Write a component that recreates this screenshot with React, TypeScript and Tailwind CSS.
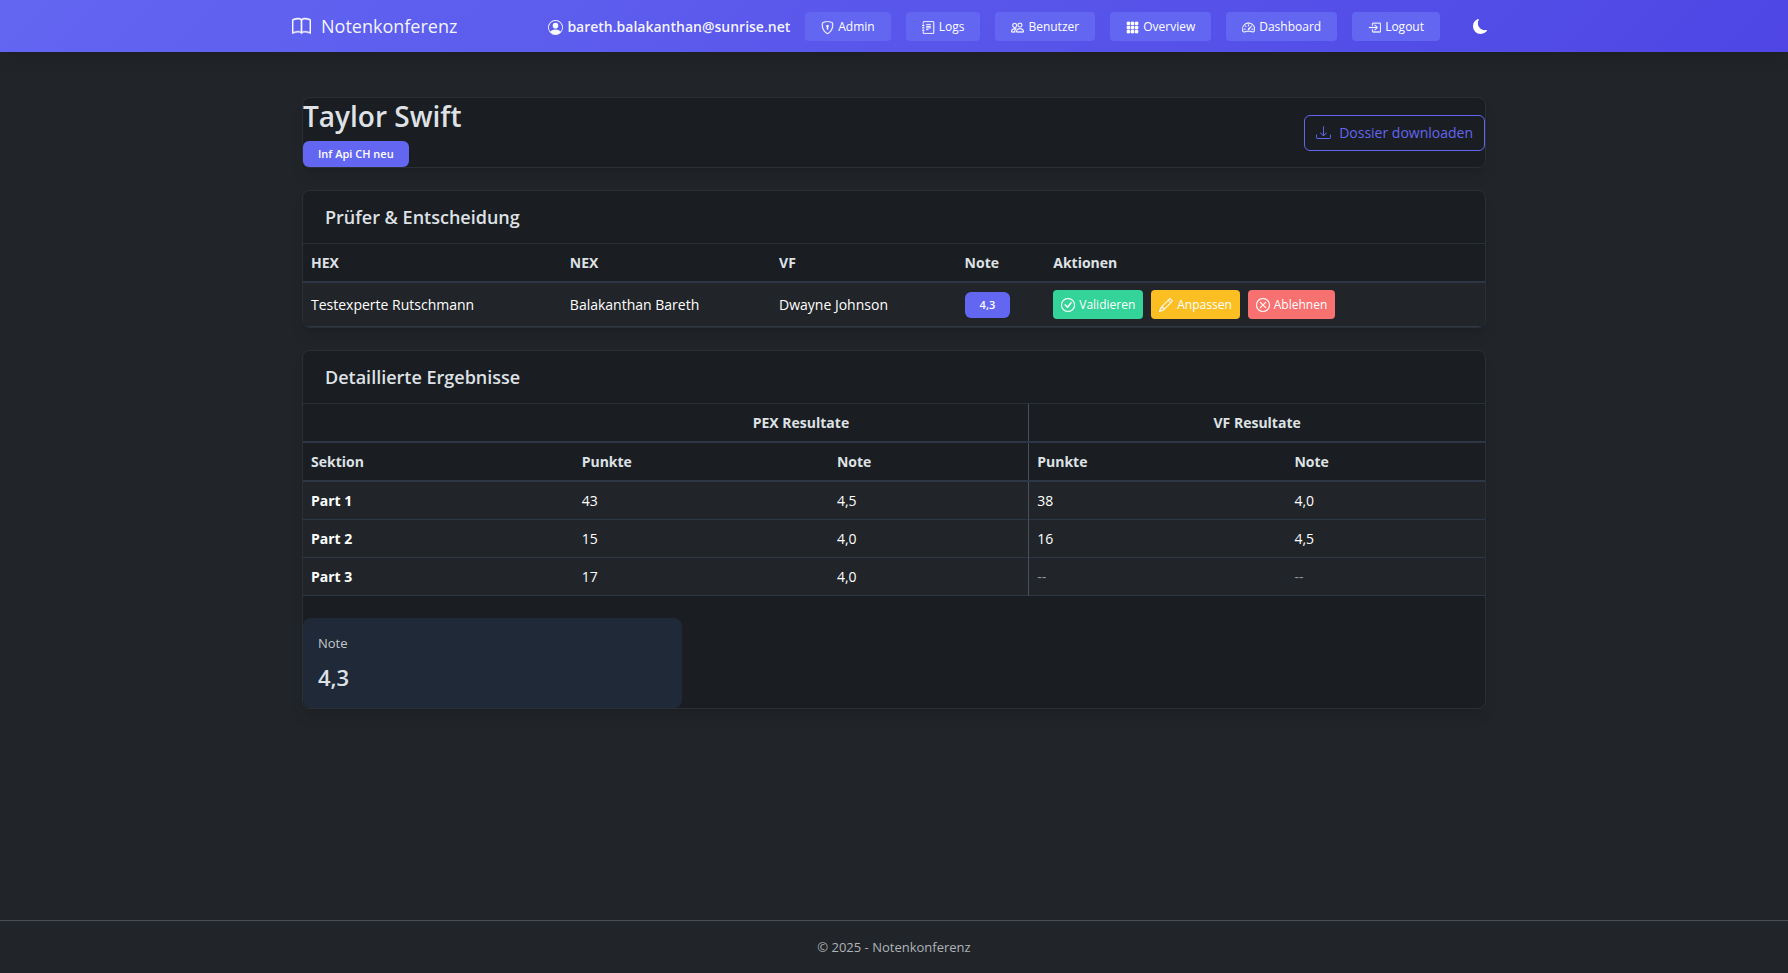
import React, { useState } from 'react';
import type { IconType } from 'react-icons';
import {
  BsBook,
  BsBoxArrowInRight,
  BsCheckCircle,
  BsDownload,
  BsGrid3X3GapFill,
  BsJournalText,
  BsMoonFill,
  BsPencil,
  BsPeople,
  BsPersonCircle,
  BsShieldLock,
  BsSpeedometer2,
  BsXCircle,
} from 'react-icons/bs';

interface NavItem {
  label: string;
  icon: IconType;
}

interface SectionResult {
  name: string;
  pexPoints: string;
  pexGrade: string;
  vfPoints: string | null;
  vfGrade: string | null;
}

const navItems: NavItem[] = [
  { label: 'Admin', icon: BsShieldLock },
  { label: 'Logs', icon: BsJournalText },
  { label: 'Benutzer', icon: BsPeople },
  { label: 'Overview', icon: BsGrid3X3GapFill },
  { label: 'Dashboard', icon: BsSpeedometer2 },
  { label: 'Logout', icon: BsBoxArrowInRight },
];

const results: SectionResult[] = [
  { name: 'Part 1', pexPoints: '43', pexGrade: '4,5', vfPoints: '38', vfGrade: '4,0' },
  { name: 'Part 2', pexPoints: '15', pexGrade: '4,0', vfPoints: '16', vfGrade: '4,5' },
  { name: 'Part 3', pexPoints: '17', pexGrade: '4,0', vfPoints: null, vfGrade: null },
];

const Navbar: React.FC = () => (
  <header className="bg-linear-135 from-[#6366f1] to-[#4f46e5] shadow-lg shadow-black/10">
    <div className="mx-auto flex max-w-[1204px] items-center justify-between py-2.5 pr-2">
      <a href="#" className="flex items-center gap-2.5 text-lg leading-8 text-white/95">
        <BsBook size={19} strokeWidth={0.4} />
        Notenkonferenz
      </a>
      <nav className="flex items-center gap-[15px]">
        <span className="flex items-center gap-1 pt-0.5 text-sm font-semibold text-white/95">
          <BsPersonCircle size={15} />
          bareth.balakanthan@sunrise.net
        </span>
        {navItems.map(({ label, icon: Icon }) => (
          <a
            key={label}
            href="#"
            className="flex h-[29px] items-center gap-1 rounded bg-[#6366f1] px-4 pt-0.5 text-xs text-white"
          >
            <Icon size={13} strokeWidth={0.3} />
            {label}
          </a>
        ))}
        <button type="button" aria-label="Farbschema wechseln" className="ml-[18px] text-white">
          <BsMoonFill size={15} />
        </button>
      </nav>
    </div>
  </header>
);

const Card: React.FC<{ title: string; children: React.ReactNode }> = ({ title, children }) => (
  <section className="mt-[22px] overflow-hidden rounded-lg border border-[#2b3035] bg-[#1a1d21] shadow-lg shadow-black/10">
    <h2 className="border-b border-[#2b3035] px-[22px] py-3 text-lg leading-7 font-semibold">{title}</h2>
    {children}
  </section>
);

const App: React.FC = () => {
  const [decision, setDecision] = useState<string | null>(null);

  return (
    <div className="flex min-h-screen flex-col bg-[#212529] font-['Open_Sans','Noto_Sans',sans-serif] text-[#dee2e6]">
      <Navbar />

      <main className="mx-auto w-full max-w-[1184px] grow pt-[45px]">
        <section className="flex items-center justify-between rounded-lg border border-[#2b3035] bg-[#1a1d21] shadow-lg shadow-black/10">
          <div>
            <h1 className="mb-1.5 text-[28px] leading-[37px] font-semibold">Taylor Swift</h1>
            <span className="block w-fit rounded-md bg-[#6366f1] px-[15px] text-[11px] leading-[26px] font-semibold text-white">
              Inf Api CH neu
            </span>
          </div>
          <button
            type="button"
            className="flex h-9 items-center gap-2 rounded-md border border-[#6366f1] px-[11px] text-sm text-[#6366f1]"
          >
            <BsDownload size={15} />
            Dossier downloaden
          </button>
        </section>

        <Card title="Prüfer &amp; Entscheidung">
          <table className="w-full table-fixed text-left text-sm leading-[21px]">
            <colgroup>
              <col className="w-[21.9%]" />
              <col className="w-[17.7%]" />
              <col className="w-[15.7%]" />
              <col className="w-[7.5%]" />
              <col />
            </colgroup>
            <thead>
              <tr className="border-b-2 border-[#2d3748]">
                <th className="p-2">HEX</th>
                <th className="p-2">NEX</th>
                <th className="p-2">VF</th>
                <th className="p-2">Note</th>
                <th className="p-2">Aktionen</th>
              </tr>
            </thead>
            <tbody className="bg-[#212529] text-white">
              <tr className="border-b border-[#2d3748]">
                <td className="px-2">Testexperte Rutschmann</td>
                <td className="px-2">Balakanthan Bareth</td>
                <td className="px-2">Dwayne Johnson</td>
                <td className="px-2">
                  <span className="block w-fit rounded-md bg-[#6366f1] px-[15px] text-[11px] leading-[26px] font-semibold">
                    4,3
                  </span>
                </td>
                <td className="px-2 py-[7px]">
                  <div className="flex gap-2 text-xs">
                    <button
                      type="button"
                      aria-pressed={decision === 'validate'}
                      onClick={() => setDecision('validate')}
                      className="flex h-[29px] items-center gap-1 rounded bg-[#34d399] px-2"
                    >
                      <BsCheckCircle size={14} strokeWidth={0.3} />
                      Validieren
                    </button>
                    <button
                      type="button"
                      aria-pressed={decision === 'adjust'}
                      onClick={() => setDecision('adjust')}
                      className="flex h-[29px] items-center gap-1 rounded bg-[#fbbf24] px-2"
                    >
                      <BsPencil size={14} strokeWidth={0.3} />
                      Anpassen
                    </button>
                    <button
                      type="button"
                      aria-pressed={decision === 'reject'}
                      onClick={() => setDecision('reject')}
                      className="flex h-[29px] items-center gap-1 rounded bg-[#f87171] px-2"
                    >
                      <BsXCircle size={14} strokeWidth={0.3} />
                      Ablehnen
                    </button>
                  </div>
                </td>
              </tr>
            </tbody>
          </table>
        </Card>

        <Card title="Detaillierte Ergebnisse">
          <table className="w-full table-fixed text-left text-sm leading-[21px]">
            <colgroup>
              <col className="w-[22.9%]" />
              <col className="w-[21.6%]" />
              <col className="w-[16.9%]" />
              <col className="w-[21.8%]" />
              <col />
            </colgroup>
            <thead>
              <tr className="border-b-2 border-[#2d3748]">
                <th className="p-2" />
                <th colSpan={2} className="p-2 text-center">PEX Resultate</th>
                <th colSpan={2} className="border-l border-l-[#495057] p-2 text-center">VF Resultate</th>
              </tr>
              <tr className="border-b-2 border-[#2d3748]">
                <th className="p-2">Sektion</th>
                <th className="p-2">Punkte</th>
                <th className="p-2">Note</th>
                <th className="border-l border-l-[#495057] p-2">Punkte</th>
                <th className="p-2">Note</th>
              </tr>
            </thead>
            <tbody className="bg-[#212529] text-white">
              {results.map((row) => (
                <tr key={row.name} className="border-b border-[#2d3748]">
                  <th className="p-2">{row.name}</th>
                  <td className="p-2">{row.pexPoints}</td>
                  <td className="p-2">{row.pexGrade}</td>
                  <td className="border-l border-l-[#495057] p-2">
                    {row.vfPoints ?? <span className="text-[#8f959b]">--</span>}
                  </td>
                  <td className="p-2">{row.vfGrade ?? <span className="text-[#8f959b]">--</span>}</td>
                </tr>
              ))}
            </tbody>
          </table>

          <div className="mt-[22px] w-[32.1%] rounded-lg bg-[#1f2937] px-[15px] pt-[15px] pb-[13px]">
            <p className="mb-1.5 text-[13px] leading-5 text-[#c3c8cf]">Note</p>
            <p className="text-[22px] leading-9 font-semibold">4,3</p>
          </div>
        </Card>
      </main>

      <footer className="border-t border-[#495057] py-4 text-center text-[13px] leading-5 text-[#aeb3b8]">
        © 2025 - Notenkonferenz
      </footer>
    </div>
  );
};

export default App;
